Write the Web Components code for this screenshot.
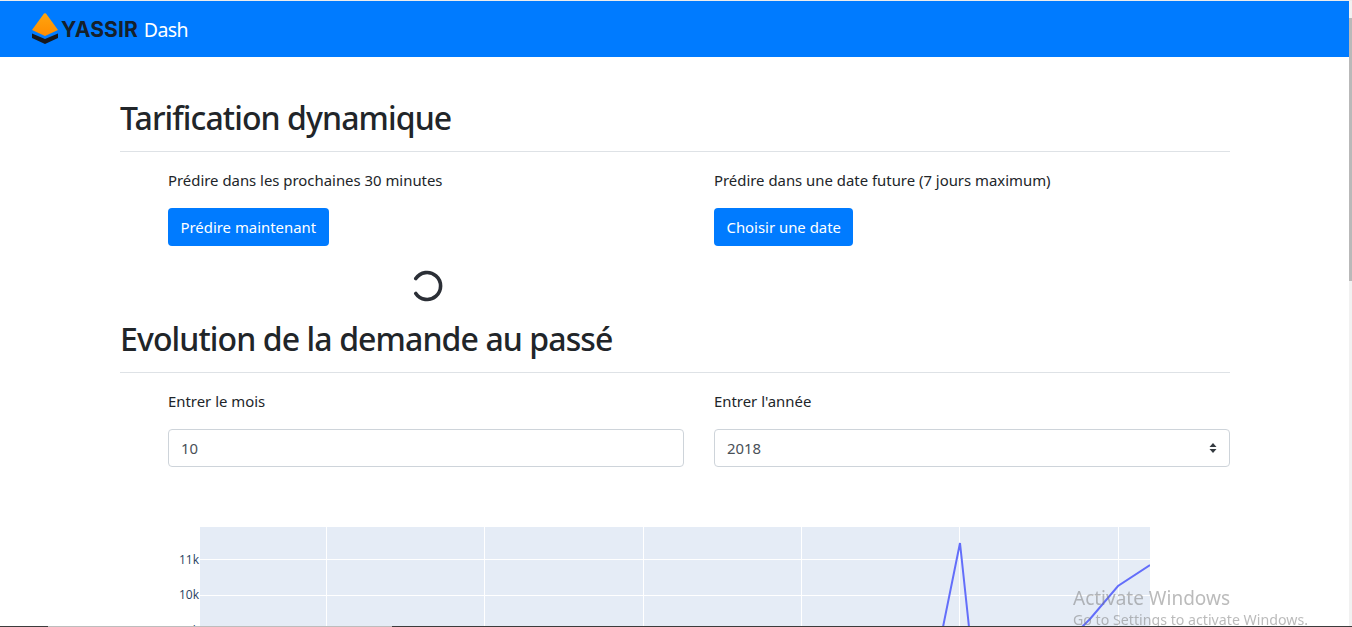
<!DOCTYPE html>
<html lang="fr">
<head>
<meta charset="utf-8">
<title>YASSIR Dash</title>
<style>
  html, body { margin: 0; height: 627px; overflow: hidden; background: #fff; }
  body { font-family: "Noto Sans", "Open Sans", sans-serif; color: #212529; }
</style>
</head>
<body>
<app-navbar></app-navbar>
<page-main>
  <page-section title="Tarification dynamique">
    <action-col label="Prédire dans les prochaines 30 minutes">
      <app-button>Prédire maintenant</app-button>
    </action-col>
    <action-col label="Prédire dans une date future (7 jours maximum)">
      <app-button>Choisir une date</app-button>
    </action-col>
    <load-spinner slot="after"></load-spinner>
  </page-section>
  <page-section title="Evolution de la demande au passé">
    <action-col label="Entrer le mois">
      <month-input value="10"></month-input>
    </action-col>
    <action-col label="Entrer l'année">
      <year-select value="2018"></year-select>
    </action-col>
  </page-section>
  <demand-chart></demand-chart>
</page-main>
<window-chrome></window-chrome>

<script>
class AppNavbar extends HTMLElement {
  constructor() {
    super();
    this.attachShadow({ mode: "open" });
  }
  connectedCallback() {
    this.shadowRoot.innerHTML = `
      <style>
        :host { display: block; margin-top: 1px; margin-right: 3px; height: 56px; background: #007bff; }
        .bar { display: flex; align-items: center; height: 100%; padding-left: 31px; }
        svg { display: block; margin-top: -1px; }
        .brand { font: 700 21px "Inter", sans-serif; color: #15202b; margin-left: 2px; letter-spacing: 0.1px; }
        .name { font-size: 19.5px; color: #fff; margin-left: 6px; letter-spacing: -0.6px; }
      </style>
      <div class="bar">
        <svg width="28" height="34" viewBox="0 0 28 34">
          <defs>
            <linearGradient id="cone" x1="0" y1="0" x2="0" y2="1">
              <stop offset="0" stop-color="#ffa50f"/>
              <stop offset="1" stop-color="#ff8c00"/>
            </linearGradient>
          </defs>
          <path d="M13 1.5 Q14 0.8 15 1.5 L27 18 L14 24 L1 18 Z" fill="url(#cone)"/>
          <path d="M1 21.5 L14 27 L27 21.5 V26 L14 32 L1 26 Z" fill="#17181c"/>
        </svg>
        <span class="brand">YASSIR</span>
        <span class="name">Dash</span>
      </div>
    `;
  }
}

class PageMain extends HTMLElement {
  constructor() {
    super();
    this.attachShadow({ mode: "open" });
    this.shadowRoot.innerHTML = `
      <style>
        :host { display: block; padding: 0 122px 0 120px; }
      </style>
      <slot></slot>
    `;
  }
}

class PageSection extends HTMLElement {
  constructor() {
    super();
    this.attachShadow({ mode: "open" });
  }
  connectedCallback() {
    this.shadowRoot.innerHTML = `
      <style>
        :host { display: block; padding-top: 40px; }
        h2 { margin: 0; font-size: 32px; line-height: 42px; font-weight: 500; letter-spacing: -0.9px; }
        hr { margin: 12px 0 0; border: 0; border-top: 1px solid #dee2e6; }
        .row { display: grid; grid-template-columns: 516px 516px; column-gap: 30px; padding: 16px 0 0 48px; }
      </style>
      <h2></h2>
      <hr>
      <div class="row"><slot></slot></div>
      <slot name="after"></slot>
    `;
    this.shadowRoot.querySelector("h2").textContent = this.getAttribute("title");
  }
}

class ActionCol extends HTMLElement {
  constructor() {
    super();
    this.attachShadow({ mode: "open" });
  }
  connectedCallback() {
    this.shadowRoot.innerHTML = `
      <style>
        :host { display: block; }
        p { margin: 0 0 16px; font-size: 14.9px; line-height: 24px; }
      </style>
      <p></p>
      <slot></slot>
    `;
    this.shadowRoot.querySelector("p").textContent = this.getAttribute("label");
  }
}

class AppButton extends HTMLElement {
  constructor() {
    super();
    this.attachShadow({ mode: "open" });
    this.shadowRoot.innerHTML = `
      <style>
        :host { display: inline-block; }
        button {
          display: block; height: 38px; padding: 0 12.5px; border: 0; border-radius: 4px;
          background: #007bff; color: #fff; font: 14.9px "Noto Sans", sans-serif;
        }
      </style>
      <button type="button"><slot></slot></button>
    `;
  }
}

class MonthInput extends HTMLElement {
  constructor() {
    super();
    this.attachShadow({ mode: "open" });
  }
  connectedCallback() {
    this.shadowRoot.innerHTML = `
      <style>
        :host { display: block; }
        input {
          display: block; width: 100%; height: 38px; box-sizing: border-box; padding: 0 12px;
          border: 1px solid #ced4da; border-radius: 4px; color: #495057;
          font: 14.9px "Noto Sans", sans-serif; outline: none;
        }
      </style>
      <input type="text">
    `;
    this.shadowRoot.querySelector("input").value = this.getAttribute("value");
  }
}

class YearSelect extends HTMLElement {
  constructor() {
    super();
    this.attachShadow({ mode: "open" });
  }
  connectedCallback() {
    this.shadowRoot.innerHTML = `
      <style>
        :host { display: block; }
        .box {
          position: relative; display: flex; align-items: center; height: 38px; box-sizing: border-box;
          padding: 0 12px; border: 1px solid #ced4da; border-radius: 4px; color: #495057; font-size: 14.9px;
        }
        svg { position: absolute; right: 11px; top: 12px; }
      </style>
      <div class="box">
        <span></span>
        <svg width="10" height="12" viewBox="0 0 10 12"><path d="M5 1 L8.5 5 H1.5 Z M5 11 L1.5 7 H8.5 Z" fill="#343a40"/></svg>
      </div>
    `;
    this.shadowRoot.querySelector("span").textContent = this.getAttribute("value");
  }
}

class LoadSpinner extends HTMLElement {
  constructor() {
    super();
    this.attachShadow({ mode: "open" });
    this.shadowRoot.innerHTML = `
      <style>
        :host { display: flex; justify-content: center; width: 614px; height: 32px; margin-top: 24px; margin-bottom: -24px; }
        svg { display: block; }
      </style>
      <svg width="32" height="32" viewBox="0 0 32 32">
        <path d="M4.8 8.6 A13.5 13.5 0 1 1 4.8 23.4" fill="none" stroke="#2b2f36" stroke-width="3.6" stroke-linecap="round"/>
      </svg>
    `;
  }
}

class DemandChart extends HTMLElement {
  constructor() {
    super();
    this.attachShadow({ mode: "open" });
    this.shadowRoot.innerHTML = `
      <style>
        :host { display: block; margin: 60px 0 0 48px; height: 100px; overflow: hidden; }
        svg { display: block; overflow: hidden; }
        text { font: 12px "Open Sans", sans-serif; fill: #2a3f5f; }
      </style>
      <svg width="982" height="100" viewBox="168 527 982 100">
        <rect x="200" y="527" width="950" height="100" fill="#e5ecf6"/>
        <g stroke="#fff" stroke-width="1">
          <path d="M326.5 527V627M484.5 527V627M643.5 527V627M801.5 527V627M959.5 527V627M1118.5 527V627"/>
          <path d="M200 559.5H1150M200 595.5H1150"/>
        </g>
        <path d="M943 627 L960 543 L969 627 M1082 627 L1090 619 L1118 586 L1150 565" fill="none" stroke="#636efa" stroke-width="2"/>
        <g text-anchor="end">
          <text x="199" y="564">11k</text>
          <text x="199" y="599">10k</text>
          <text x="199" y="635">9k</text>
        </g>
      </svg>
    `;
  }
}

class WindowChrome extends HTMLElement {
  constructor() {
    super();
    this.attachShadow({ mode: "open" });
    this.shadowRoot.innerHTML = `
      <style>
        .track { position: fixed; top: 0; right: 0; bottom: 0; width: 3px; background: #f1f1f1; }
        .thumb { position: fixed; top: 18px; right: 0; width: 3px; height: 263px; background: #b9b9b9; }
        .topline { position: fixed; top: 0; left: 0; right: 0; height: 1px; background: #ececec; }
        .edge { position: fixed; left: 0; right: 0; bottom: 0; height: 1px; background: linear-gradient(to right, #3c3c3c 48px, #bdbdbd 48px, #bdbdbd 392px, #3c3c3c 392px); }
        .mark { position: fixed; left: 1073px; top: 586px; color: rgba(120,120,120,.5); white-space: nowrap; }
        .mark div:first-child { font-size: 19px; line-height: 25px; }
        .mark div:last-child { font-size: 14.2px; line-height: 18px; margin-top: 0; }
      </style>
      <div class="track"></div>
      <div class="thumb"></div>
      <div class="topline"></div>
      <div class="mark"><div>Activate Windows</div><div>Go to Settings to activate Windows.</div></div>
      <div class="edge"></div>
    `;
  }
}

customElements.define("app-navbar", AppNavbar);
customElements.define("page-main", PageMain);
customElements.define("page-section", PageSection);
customElements.define("action-col", ActionCol);
customElements.define("app-button", AppButton);
customElements.define("month-input", MonthInput);
customElements.define("year-select", YearSelect);
customElements.define("load-spinner", LoadSpinner);
customElements.define("demand-chart", DemandChart);
customElements.define("window-chrome", WindowChrome);
</script>
</body>
</html>
